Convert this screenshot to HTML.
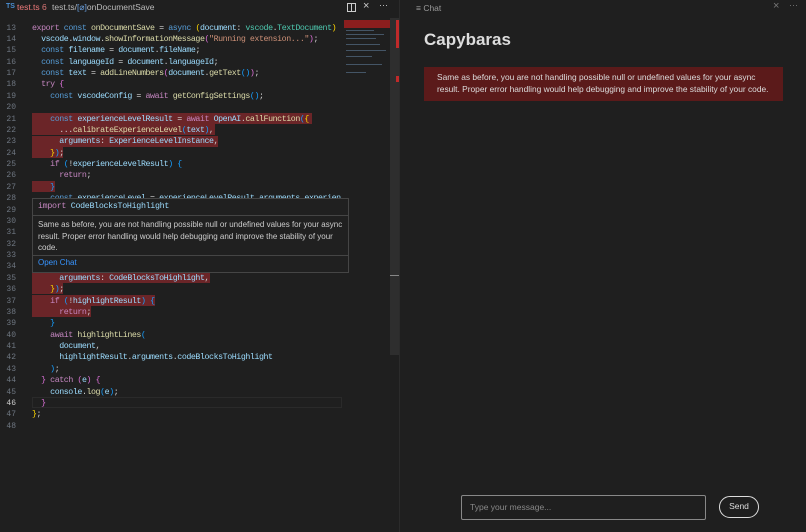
<!DOCTYPE html>
<html><head><meta charset="utf-8"><style>
*{margin:0;padding:0;box-sizing:border-box}
body{width:806px;height:532px;background:#1f1f1f;overflow:hidden;position:relative;font-family:"Liberation Sans",sans-serif}
.ed{position:absolute;left:0;top:0;width:400px;height:532px;background:#1f1f1f;border-right:1px solid #2b2b2b}
.ln{position:absolute;left:0;width:16px;text-align:right;font:8px/11.37px "Liberation Mono",monospace;color:#6e7681}
.cd{position:absolute;left:32px;white-space:pre;font:8.3px/11.37px "Liberation Mono",monospace;letter-spacing:-0.44px;color:#d4d4d4}
.hl{position:absolute;background:#6b2528}
.k{color:#c586c0}.b{color:#569cd6}.v{color:#9cdcfe}.f{color:#dcdcaa}.s{color:#ce9178}.t{color:#4ec9b0}.y{color:#ffd700}.p{color:#da70d6}.c{color:#179fff}
</style></head><body>
<div class="ed">
<div style="position:absolute;left:6px;top:3px;font-size:7px;color:#4a8fd4;font-weight:bold">TS</div>
<div style="position:absolute;left:17px;top:2px;font-size:8.5px;color:#f07b7b">test.ts <span style="color:#d77">6</span></div>
<div style="position:absolute;left:52px;top:2px;font-size:8.5px;color:#bbb">test.ts/<span style="color:#6aa0e0">[⌀]</span>onDocumentSave</div>
<div style="position:absolute;left:347px;top:3px;width:9px;height:9px;border:1px solid #ccc"><div style="position:absolute;left:3px;top:0;width:1px;height:7px;background:#ccc"></div></div>
<div style="position:absolute;left:363px;top:0px;font-size:11px;color:#ccc">×</div>
<div style="position:absolute;left:379px;top:0px;font-size:9px;color:#ccc">···</div>
<div style="position:absolute;left:344px;top:18px;width:46px;height:60px">
<div style="position:absolute;left:0;top:2px;width:46px;height:8px;background:#8b1e1e"></div>
<div style="position:absolute;left:2px;top:12px;width:28px;height:1px;background:#456"></div>
<div style="position:absolute;left:2px;top:16px;width:38px;height:1px;background:#456"></div>
<div style="position:absolute;left:2px;top:20px;width:30px;height:1px;background:#456"></div>
<div style="position:absolute;left:2px;top:26px;width:34px;height:1px;background:#456"></div>
<div style="position:absolute;left:2px;top:32px;width:40px;height:1px;background:#456"></div>
<div style="position:absolute;left:2px;top:38px;width:26px;height:1px;background:#456"></div>
<div style="position:absolute;left:2px;top:46px;width:36px;height:1px;background:#456"></div>
<div style="position:absolute;left:2px;top:54px;width:20px;height:1px;background:#456"></div>
</div>
<div style="position:absolute;left:390px;top:18px;width:9px;height:337px;background:#2e2e2e"></div>
<div style="position:absolute;left:396px;top:20px;width:3px;height:28px;background:#c02a2a"></div>
<div style="position:absolute;left:396px;top:76px;width:3px;height:6px;background:#c02a2a"></div>
<div style="position:absolute;left:390px;top:275px;width:9px;height:1px;background:#888"></div>

<div class="hl" style="left:32px;top:113px;width:280px;height:11.4px"></div>
<div class="hl" style="left:32px;top:124px;width:183px;height:11.4px"></div>
<div class="hl" style="left:32px;top:136px;width:186px;height:11.4px"></div>
<div class="hl" style="left:32px;top:147px;width:31px;height:11.4px"></div>
<div class="hl" style="left:32px;top:181px;width:23px;height:11.4px"></div>
<div class="hl" style="left:32px;top:260px;width:178px;height:23px"></div>
<div class="hl" style="left:32px;top:283px;width:31px;height:11.4px"></div>
<div class="hl" style="left:32px;top:295px;width:123px;height:11.4px"></div>
<div class="hl" style="left:32px;top:306px;width:59px;height:11.4px"></div>

<div class="ln" style="top:22.5px">13<br>14<br>15<br>16<br>17<br>18<br>19<br>20<br>21<br>22<br>23<br>24<br>25<br>26<br>27<br>28<br>29<br>30<br>31<br>32<br>33<br>34<br>35<br>36<br>37<br>38<br>39<br>40<br>41<br>42<br>43<br>44<br>45<br><span style="color:#ccc">46</span><br>47<br>48</div>
<div class="cd" style="top:22.5px"><span class="k">export</span> <span class="b">const</span> <span class="f">onDocumentSave</span> = <span class="b">async</span> <span class="y">(</span><span class="v">document</span>: <span class="t">vscode</span>.<span class="t">TextDocument</span><span class="y">)</span>
  <span class="v">vscode</span>.<span class="v">window</span>.<span class="f">showInformationMessage</span><span class="p">(</span><span class="s">"Running extension..."</span><span class="p">)</span>;
  <span class="b">const</span> <span class="v">filename</span> = <span class="v">document</span>.<span class="v">fileName</span>;
  <span class="b">const</span> <span class="v">languageId</span> = <span class="v">document</span>.<span class="v">languageId</span>;
  <span class="b">const</span> <span class="v">text</span> = <span class="f">addLineNumbers</span><span class="p">(</span><span class="v">document</span>.<span class="f">getText</span><span class="c">()</span><span class="p">)</span>;
  <span class="k">try</span> <span class="p">{</span>
    <span class="b">const</span> <span class="v">vscodeConfig</span> = <span class="k">await</span> <span class="f">getConfigSettings</span><span class="c">()</span>;

    <span class="b">const</span> <span class="v">experienceLevelResult</span> = <span class="k">await</span> <span class="v">OpenAI</span>.<span class="f">callFunction</span><span class="c">(</span><span class="y">{</span>
      ...<span class="f">calibrateExperienceLevel</span><span class="c">(</span><span class="v">text</span><span class="c">)</span>,
      <span class="v">arguments</span>: <span class="v">ExperienceLevelInstance</span>,
    <span class="y">}</span><span class="c">)</span>;
    <span class="k">if</span> <span class="c">(</span>!<span class="v">experienceLevelResult</span><span class="c">)</span> <span class="c">{</span>
      <span class="k">return</span>;
    <span class="c">}</span>
    <span class="b">const</span> <span class="v">experienceLevel</span> = <span class="v">experienceLevelResult</span>.<span class="v">arguments</span>.<span class="v">experien</span>






      <span class="v">arguments</span>: <span class="v">CodeBlocksToHighlight</span>,
    <span class="y">}</span><span class="c">)</span>;
    <span class="k">if</span> <span class="c">(</span>!<span class="v">highlightResult</span><span class="c">)</span> <span class="c">{</span>
      <span class="k">return</span>;
    <span class="c">}</span>
    <span class="k">await</span> <span class="f">highlightLines</span><span class="c">(</span>
      <span class="v">document</span>,
      <span class="v">highlightResult</span>.<span class="v">arguments</span>.<span class="v">codeBlocksToHighlight</span>
    <span class="c">)</span>;
  <span class="p">}</span> <span class="k">catch</span> <span class="p">(</span><span class="v">e</span><span class="p">)</span> <span class="p">{</span>
    <span class="v">console</span>.<span class="f">log</span><span class="c">(</span><span class="v">e</span><span class="c">)</span>;
  <span class="p">}</span>
<span class="y">}</span>;
</div>
<div style="position:absolute;left:32px;top:397px;width:310px;height:11.4px;border:1px solid #2a2a2a"></div>
<div style="position:absolute;left:32px;top:198px;width:317px;height:75px;background:#202020;border:1px solid #454545">
<div style="padding:3px 5px;height:17px;font:8.3px 'Liberation Mono',monospace;letter-spacing:-0.3px;border-bottom:1px solid #454545"><span class="k">import</span> <span class="v">CodeBlocksToHighlight</span></div>
<div style="padding:3px 5px;height:40px;font-size:8px;line-height:11.5px;color:#ccc;border-bottom:1px solid #454545">Same as before, you are not handling possible null or undefined values for your async result. Proper error handling would help debugging and improve the stability of your code.</div>
<div style="padding:2px 5px;font-size:8px;color:#3794ff">Open Chat</div>
</div>
</div>
<div style="position:absolute;left:416px;top:3px;font-size:8.5px;color:#999">≡ Chat</div>
<div style="position:absolute;left:773px;top:0px;font-size:11px;color:#777">×</div>
<div style="position:absolute;left:789px;top:0px;font-size:9px;color:#777">···</div>
<div style="position:absolute;left:424px;top:30px;font-size:17px;font-weight:bold;color:#ddd">Capybaras</div>
<div style="position:absolute;left:424px;top:67px;width:359px;height:34px;background:#5b1a1a;padding:5px 10px 5px 13px;font-size:8.4px;line-height:11.8px;color:#ddd">Same as before, you are not handling possible null or undefined values for your async result. Proper error handling would help debugging and improve the stability of your code.</div>
<div style="position:absolute;left:461px;top:495px;width:245px;height:25px;border:1px solid #888;border-radius:2px;padding:6px 8px;font-size:8.5px;color:#888">Type your message...</div>
<div style="position:absolute;left:719px;top:496px;width:40px;height:22px;border:1.5px solid #ddd;border-radius:11px;text-align:center;line-height:19px;font-size:8.5px;color:#ddd">Send</div>
</body></html>
